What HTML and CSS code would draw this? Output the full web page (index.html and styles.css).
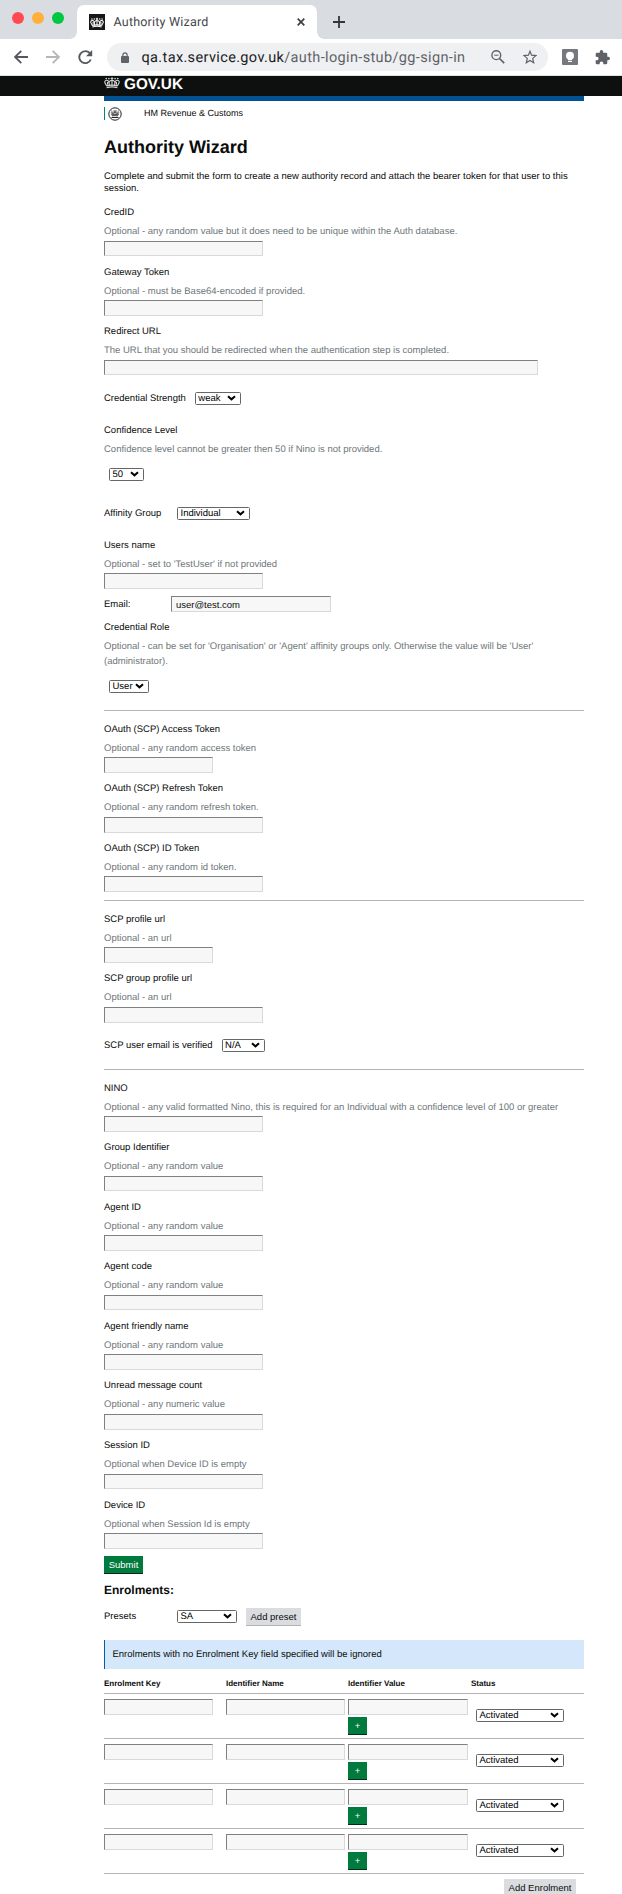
FILE: index.html
```html
<!DOCTYPE html>
<html lang="en">
<head>
<meta charset="utf-8">
<title>Authority Wizard</title>
<link rel="stylesheet" href="styles.css">
</head>
<body>
<svg width="0" height="0" class="defs">
  <symbol id="crown" viewBox="0 0 36 28">
    <path d="M6 25.500Q18 22 30 25.500M6 22 L4 18C0 13 2 9 6 9C10 9 12 12 12 21M30 22 L32 18C36 13 34 9 30 9C26 9 24 12 24 21M12 13C13 10 16 9 18 9C20 9 23 10 24 13M18 2V22M15 5H21M8 13V19M28 13V19" fill="none" stroke="currentColor" stroke-width="2.600"/>
    <path d="M5 20Q18 17 31 20L30 23Q18 20 6 23Z" fill="currentColor"/>
    <circle cx="5" cy="5" r="1.900" fill="currentColor"/><circle cx="11" cy="5" r="1.900" fill="currentColor"/><circle cx="25" cy="5" r="1.900" fill="currentColor"/><circle cx="31" cy="5" r="1.900" fill="currentColor"/>
  </symbol>
  <symbol id="chevron" viewBox="0 0 9 6"><path d="M1 1.200 L4.500 4.300 L8 1.200" fill="none" stroke="#000" stroke-width="2"/></symbol>
</svg>
<header class="browser">
  <div class="tabstrip">
    <div class="lights"><i class="red"></i><i class="amber"></i><i class="green"></i></div>
    <div class="tab">
      <span class="favicon"><svg width="14" height="11"><use href="#crown"/></svg></span>
      <span class="tab-title">Authority Wizard</span>
      <svg class="tab-close" width="8" height="8" viewBox="0 0 8 8"><path d="M.7.7 7.300 7.300M7.300.7.7 7.300" stroke="#3c4043" stroke-width="1.700"/></svg>
    </div>
    <svg class="new-tab" width="12" height="12" viewBox="0 0 12 12"><path d="M6 0V12M0 6H12" stroke="#33363a" stroke-width="1.800"/></svg>
  </div>
  <div class="toolbar">
    <svg class="back" width="14" height="14" viewBox="0 0 14 14"><path d="M14 7H1.500M7.300.8 1.100 7 7.300 13.200" fill="none" stroke="#55585d" stroke-width="1.800"/></svg>
    <svg class="forward" width="14" height="14" viewBox="0 0 14 14"><path d="M0 7H12.500M6.700.8 12.900 7 6.700 13.200" fill="none" stroke="#b4b6b9" stroke-width="1.800"/></svg>
    <svg class="reload" width="15" height="15" viewBox="0 0 15 15"><path d="M12.800 9.500A6 6 0 1 1 11.800 3.200L13 4.500" fill="none" stroke="#55585d" stroke-width="1.900"/><path d="M14.200 0V6.300H8Z" fill="#55585d"/></svg>
    <div class="omnibox">
      <svg class="lock" width="8" height="11" viewBox="0 0 8 11"><rect y="4" width="8" height="7" rx="1" fill="#5f6368"/><path d="M1.900 5V2.900a2.100 2.100 0 0 1 4.200 0V5" fill="none" stroke="#5f6368" stroke-width="1.200"/></svg>
      <span class="url">qa.tax.service.gov.uk<span>/auth-login-stub/gg-sign-in</span></span>
      <svg class="zoomout" width="14" height="14" viewBox="0 0 14 14"><circle cx="5.300" cy="5.200" r="4.400" fill="none" stroke="#5f6368" stroke-width="1.400"/><path d="M8.500 8.500 13.200 13.200" stroke="#5f6368" stroke-width="1.700"/><path d="M3.200 5.200H7.500" stroke="#5f6368"/></svg>
      <svg class="star" width="14" height="14" viewBox="0 0 14 14"><path d="M7 1.200 8.600 5.200 13 5.600 9.700 8.400 10.700 12.700 7 10.400 3.300 12.700 4.300 8.400 1 5.600 5.400 5.200Z" fill="none" stroke="#5f6368" stroke-width="1.200"/></svg>
    </div>
    <svg class="bulb" width="16" height="16" viewBox="0 0 16 16"><rect width="16" height="16" rx="1" fill="#74797e"/><circle cx="8" cy="6.800" r="4" fill="#fff"/><path d="M6 9H10V11.200H6ZM6 12H10V13H6Z" fill="#fff"/></svg>
    <svg class="puzzle" width="15" height="15" viewBox="0 0 22 22"><path d="M19.500 10H18V6a2 2 0 0 0-2-2h-4V2.500a2.500 2.500 0 0 0-5 0V4H3a2 2 0 0 0-2 2v3.800h1.500a2.700 2.700 0 0 1 0 5.400H1V19a2 2 0 0 0 2 2h3.800v-1.500a2.700 2.700 0 0 1 5.400 0V21H16a2 2 0 0 0 2-2v-4h1.500a2.500 2.500 0 0 0 0-5Z" fill="#5f6368"/></svg>
  </div>
</header>
<div class="govbar"><svg width="16" height="13"><use href="#crown"/></svg><b>GOV.UK</b></div>
<main class="page">
  <div class="bluebar"></div>
  <div class="org"><svg width="14" height="14" viewBox="0 0 14 14"><circle cx="7" cy="7" r="6.200" fill="none" stroke="#222" stroke-width="1"/><svg x="2.500" y="2.800" width="9" height="7"><use href="#crown"/></svg><path d="M3.500 10.500H10.500" stroke="#222"/></svg><span>HM Revenue &amp; Customs</span></div>
  <h1>Authority Wizard</h1>
  <p class="intro">Complete and submit the form to create a new authority record and attach the bearer token for that user to this session.</p>

  <div class="field"><label>CredID</label><p>Optional - any random value but it does need to be unique within the Auth database.</p><input></div>
  <div class="field"><label>Gateway Token</label><p>Optional - must be Base64-encoded if provided.</p><input></div>
  <div class="field"><label>Redirect URL</label><p>The URL that you should be redirected when the authentication step is completed.</p><input class="wide"></div>
  <div class="inline strength"><label>Credential Strength</label><div class="select w46">weak<svg><use href="#chevron"/></svg></div></div>
  <div class="field choice"><label>Confidence Level</label><p>Confidence level cannot be greater then 50 if Nino is not provided.</p><div class="select w35">50<svg><use href="#chevron"/></svg></div></div>
  <div class="inline affinity"><label>Affinity Group</label><div class="select w73">Individual<svg><use href="#chevron"/></svg></div></div>
  <div class="field user"><label>Users name</label><p>Optional - set to 'TestUser' if not provided</p><input></div>
  <div class="inline email"><label>Email:</label><input value="user@test.com"></div>
  <div class="field choice role"><label>Credential Role</label><p>Optional - can be set for 'Organisation' or 'Agent' affinity groups only. Otherwise the value will be 'User' (administrator).</p><div class="select w40">User<svg><use href="#chevron"/></svg></div></div>

  <section class="group">
    <div class="field"><label>OAuth (SCP) Access Token</label><p>Optional - any random access token</p><input class="short"></div>
    <div class="field"><label>OAuth (SCP) Refresh Token</label><p>Optional - any random refresh token.</p><input></div>
    <div class="field"><label>OAuth (SCP) ID Token</label><p>Optional - any random id token.</p><input></div>
  </section>
  <section class="group scp">
    <div class="field"><label>SCP profile url</label><p>Optional - an url</p><input class="short"></div>
    <div class="field"><label>SCP group profile url</label><p>Optional - an url</p><input></div>
    <div class="inline verified"><label>SCP user email is verified</label><div class="select w43">N/A<svg><use href="#chevron"/></svg></div></div>
  </section>
  <section class="group ids">
    <div class="field"><label>NINO</label><p>Optional - any valid formatted Nino, this is required for an Individual with a confidence level of 100 or greater</p><input></div>
    <div class="field"><label>Group Identifier</label><p>Optional - any random value</p><input></div>
    <div class="field"><label>Agent ID</label><p>Optional - any random value</p><input></div>
    <div class="field"><label>Agent code</label><p>Optional - any random value</p><input></div>
    <div class="field"><label>Agent friendly name</label><p>Optional - any random value</p><input></div>
    <div class="field"><label>Unread message count</label><p>Optional - any numeric value</p><input></div>
    <div class="field"><label>Session ID</label><p>Optional when Device ID is empty</p><input></div>
    <div class="field"><label>Device ID</label><p>Optional when Session Id is empty</p><input></div>
  </section>
  <button class="btn submit">Submit</button>
  <h2>Enrolments:</h2>
  <div class="inline presets"><label>Presets</label><div class="select w60">SA<svg><use href="#chevron"/></svg></div><button class="btn grey">Add preset</button></div>
  <div class="notice">Enrolments with no Enrolment Key field specified will be ignored</div>
  <div class="table">
    <div class="row head"><b>Enrolment Key</b><b>Identifier Name</b><b>Identifier Value</b><b>Status</b></div>
    <div class="row"><input class="short"><input><div class="value"><input><button class="btn plus">+</button></div><div class="select">Activated<svg><use href="#chevron"/></svg></div></div>
    <div class="row"><input class="short"><input><div class="value"><input><button class="btn plus">+</button></div><div class="select">Activated<svg><use href="#chevron"/></svg></div></div>
    <div class="row"><input class="short"><input><div class="value"><input><button class="btn plus">+</button></div><div class="select">Activated<svg><use href="#chevron"/></svg></div></div>
    <div class="row"><input class="short"><input><div class="value"><input><button class="btn plus">+</button></div><div class="select">Activated<svg><use href="#chevron"/></svg></div></div>
  </div>
  <div class="actions"><button class="btn grey add">Add Enrolment</button></div>
</main>
</body>
</html>
```
FILE: styles.css
```css
* { box-sizing: border-box; }
html { height: 1894px; overflow: hidden; }
body { margin: 0; height: 1894px; overflow: hidden; background: #fff; color: #0b0c0c; font: 9.5px/15px "Liberation Sans", Arial, sans-serif; text-rendering: geometricPrecision; }
.defs { position: absolute; }
.browser { font-family: Roboto, sans-serif; }
.tabstrip { display: flex; height: 39px; background: #d9dce1; }
.lights { display: flex; gap: 8px; padding: 12px 7px 0 12px; width: 77px; height: 39px; }
.lights i { width: 12px; height: 12px; border-radius: 50%; }
.red { background: #ff4b50; }
.amber { background: #ffb03b; }
.green { background: #00c740; }
.tab { position: relative; display: flex; align-items: center; width: 240px; height: 34px; margin-top: 5px; padding: 0 12px; border-radius: 7px 7px 0 0; background: #fff; }
.tab::before, .tab::after { content: ""; position: absolute; bottom: 0; width: 7px; height: 7px; }
.tab::before { left: -7px; background: radial-gradient(circle at 0 0, #d9dce1 6.5px, #fff 7px); }
.tab::after { right: -7px; background: radial-gradient(circle at 100% 0, #d9dce1 6.5px, #fff 7px); }
.favicon { display: flex; align-items: center; justify-content: center; width: 16px; height: 16px; background: #171717; color: #fff; }
.tab-title { margin-left: 8.5px; color: #45484c; font-size: 12.5px; letter-spacing: .2px; }
.tab-close { margin-left: auto; }
.new-tab { margin: 16px 0 0 16px; }
.toolbar { display: flex; align-items: center; height: 37px; border-bottom: 1px solid #dbe3df; background: #fff; }
.back { margin-left: 14px; }
.forward { margin-left: 18px; }
.reload { margin-left: 18px; }
.toolbar > svg { flex: none; }
.omnibox { flex: none; display: flex; align-items: center; width: 441px; height: 28px; margin-left: 14px; padding: 0 11px 0 14px; border-radius: 14px; background: #eff0f2; }
.omnibox svg { flex: none; }
.url { flex: none; width: 324px; margin-left: 12.5px; color: #202124; font-size: 14.5px; letter-spacing: .36px; white-space: nowrap; }
.url span { color: #5f6368; }
.zoomout { margin-left: 25.5px; }
.star { margin-left: auto; }
.bulb { margin-left: 14px; }
.puzzle { margin-left: 17px; }
.govbar { display: flex; gap: 4px; height: 20px; padding-left: 104px; background: #0e100f; color: #fff; }
.govbar svg { color: #d4d4d4; }
.govbar b { padding-top: 1px; font-size: 15.3px; }
.page { width: 480px; margin-left: 104px; }
.bluebar { height: 5px; background: #005293; }
.org { display: flex; align-items: center; height: 13px; margin-top: 6px; padding-left: 3px; border-left: 1px solid #00847e; font-size: 9px; }
.org span { margin-left: 22px; }
h1 { margin: 15px 0 0; font-size: 18px; line-height: 24px; }
.intro { margin: 11px 0 0; line-height: 12px; padding-top: 1px; }
label { display: block; height: 15px; }
.field { height: 59.57px; padding-top: .4px; }
.intro + .field { margin-top: 9.7px; }
.field p { margin: 4px 0 0; color: #6f777b; }
.field input { margin-top: 1.6px; }
input { display: block; width: 159px; height: 15.6px; margin: 0; padding: 0 4px; border: 1px solid; border-color: #808080 #d9d9d9 #d9d9d9 #808080; border-radius: 0; background: #f7f7f7; color: #0b0c0c; font: 9.5px "Liberation Sans", Arial, sans-serif; }
input.short { width: 109px; }
input.wide { width: 434px; }
.inline { display: flex; align-items: center; }
.select { display: flex; align-items: center; justify-content: space-between; height: 13px; padding: 0 4px 0 2.5px; border: 1px solid #666; border-radius: 1.5px; color: #000; line-height: 11px; }
.select svg { width: 9px; height: 6px; }
.w46 { width: 46px; }
.w35 { width: 35px; }
.w73 { width: 73px; }
.w40 { width: 40px; }
.w43 { width: 43px; }
.w60 { width: 60px; }
.strength { height: 15px; margin-top: 7.6px; gap: 9px; }
.choice { height: auto; margin-top: 16.6px; }
.choice .select { margin: 11px 0 0 5px; }
.affinity { height: 15px; margin-top: 25px; }
.affinity label, .presets label { width: 73px; }
.user { height: 52px; margin-top: 16.2px; }
.email { height: 16px; margin-top: 7px; }
.email label { width: 67px; }
.email input { width: 160px; height: 16px; }
.role { margin-top: 7.4px; }
.group { height: 190px; margin-top: 17px; padding-top: 10.45px; border-top: 1px solid #b5b5b5; }
.scp { height: 169px; margin-top: 0; }
.verified { height: 15px; margin-top: 7.4px; gap: 9px; }
.ids { height: 487px; margin-top: 0; padding-top: 10.3px; }
.btn { display: block; margin: 0; padding: 0; height: 18px; border: 0; border-bottom: 1px solid #002d18; border-radius: 0; background: #007a3d; color: #fff; font: 9.5px/17px "Liberation Sans", Arial, sans-serif; }
.submit { width: 39px; }
h2 { margin: 8px 0 0; font-size: 12px; line-height: 16px; }
.presets { height: 18px; margin-top: 10px; }
.presets .select { margin-bottom: 1px; }
.grey { width: 55px; margin-left: 9px; border-bottom-color: #b0b3b7; background: #dadcdf; color: #0b0c0c; }
.notice { height: 29px; margin-top: 14px; padding-left: 7.5px; border-left: 1px solid #005ea5; background: #d5e8fb; line-height: 30px; }
.row { display: grid; grid-template-columns: 122px 122px 123px 113px; height: 45px; padding-top: 5px; border-bottom: 1px solid #b5b5b5; }
.head { height: 25px; padding-top: 7px; font-size: 8px; }
.row input { width: 119px; }
.row input.short { width: 109px; }
.value input { width: 120px; }
.plus { width: 19px; margin-top: 2px; }
.row .select { width: 88px; margin: 10px 0 0 5px; }
.actions { display: flex; justify-content: flex-end; padding: 5px 8px 0 0; }
.add { width: 72px; }
```
